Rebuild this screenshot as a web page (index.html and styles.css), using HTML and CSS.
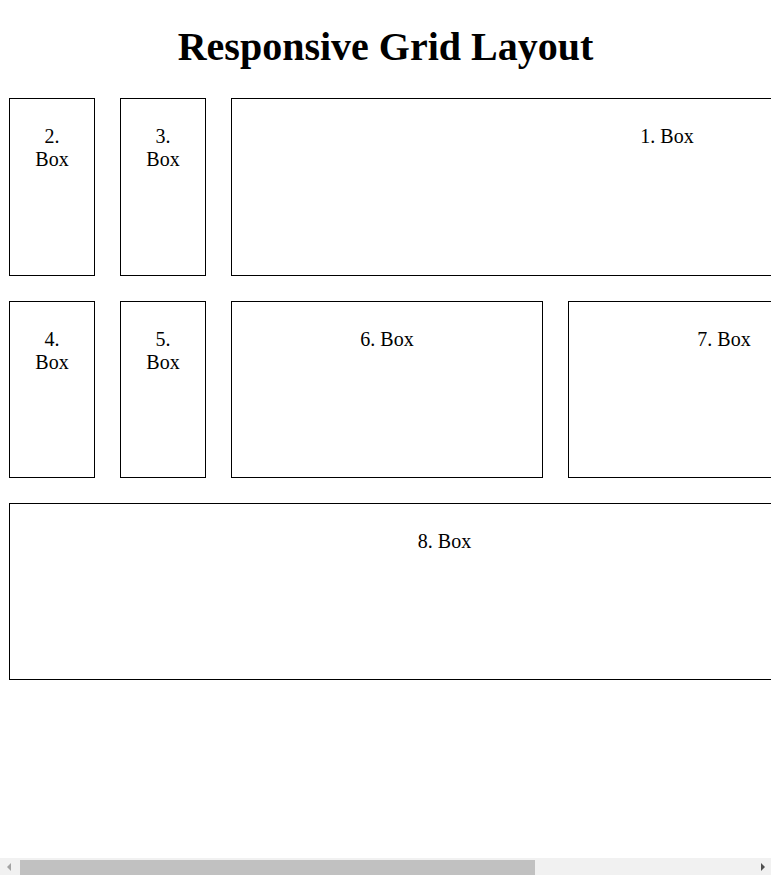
FILE: index.html
```html
<!DOCTYPE html>
<html lang="en">
<head>
    <meta charset="UTF-8">
    <meta name="viewport" content="width=device-width, initial-scale=1.0">
    <title>Responsive Grid Layout</title>
    <link rel="stylesheet" href="styles.css">
</head>
<body>

    <h1>Responsive Grid Layout</h1>

    <!-- grid of boxes -->
    <div class="grid">
        <div class="box box-wide">1. Box</div>
        <div class="box">2. Box</div>
        <div class="box">3. Box</div>
        <div class="box">4. Box</div>
        <div class="box">5. Box</div>
        <div class="box">6. Box</div>
        <div class="box">7. Box</div>
        <div class="box box-full">8. Box</div>
    </div>

    <!-- horizontal scroll bar -->
    <div class="hscroll">
        <span class="arrow arrow-left"></span>
        <div class="track">
            <div class="thumb"></div>
        </div>
        <span class="arrow arrow-right"></span>
    </div>

</body>
</html>
```

FILE: styles.css
```css
html {
    overflow: hidden;
}

body {
    font-family: "Liberation Serif", "Times New Roman", serif;
    color: #000;
    background: #fff;
    margin: 0;
    padding: 0 9px;
}

h1 {
    font-size: 40px;
    line-height: 46px;
    font-weight: bold;
    text-align: center;
    margin: 24px 0 28.3px;
}

/* grid */
.grid {
    display: grid;
    grid-template-columns: 86px 86px 312px 312px;
    grid-auto-rows: 177.3px;
    gap: 25px;
}

.box {
    box-sizing: border-box;
    border: 1px solid #000;
    padding: 26px 25px 25px;
    font-size: 20px;
    line-height: 23px;
    text-align: center;
}

.box-wide {
    grid-column: 3 / 5;
    grid-row: 1;
    width: 872px;
}

.box-full {
    grid-column: 1 / 5;
}

/* scroll bar */
.hscroll {
    position: fixed;
    left: 0;
    right: 0;
    bottom: 0;
    height: 17px;
    background: #f1f1f1;
    display: flex;
    align-items: stretch;
}

.track {
    flex: 1;
    padding: 2px 3px 0;
}

.thumb {
    width: 515px;
    height: 100%;
    background: #c1c1c1;
}

.arrow {
    width: 17px;
    display: flex;
    align-items: center;
    justify-content: center;
}

.arrow::before {
    content: "";
    border-top: 4px solid transparent;
    border-bottom: 4px solid transparent;
}

.arrow-left::before {
    border-right: 4px solid #a3a3a3;
}

.arrow-right::before {
    border-left: 4px solid #505050;
}
```
